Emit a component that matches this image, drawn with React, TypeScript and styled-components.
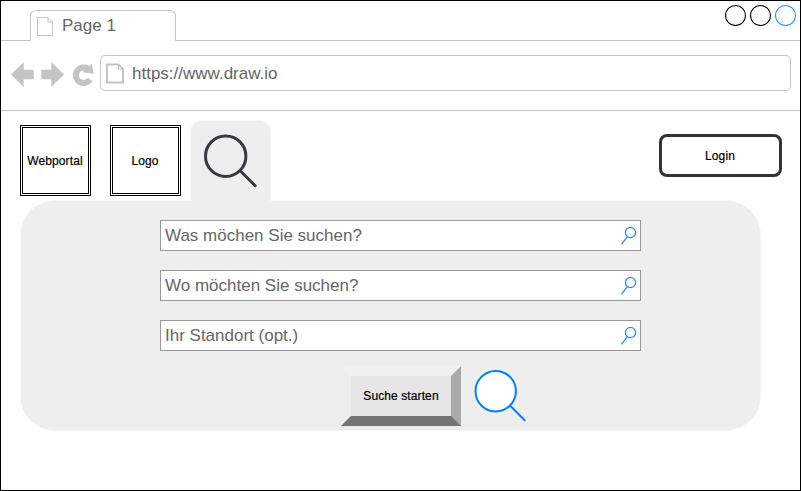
import React from "react";
import styled, { createGlobalStyle } from "styled-components";

const GlobalStyle = createGlobalStyle`
  * { box-sizing: border-box; }
  body { margin: 0; background: #fff; font-family: "Liberation Sans", Arial, sans-serif; }
`;

const BrowserWindow = styled.div`
  width: 801px;
  height: 491px;
  border: 1px solid #000;
  background: #fff;
  overflow: hidden;
`;

const TabStrip = styled.header`
  height: 40px;
  display: flex;
  justify-content: space-between;
  padding: 0 3px 0 29px;
  border-bottom: 1px solid #c4c4c4;
`;

const PageTab = styled.div`
  width: 146px;
  height: 31px;
  margin-top: 9px;
  padding: 0 0 0 6px;
  display: flex;
  gap: 8px;
  border: 1px solid #c4c4c4;
  border-bottom: 0;
  border-radius: 6px 6px 0 0;
  background: #fff;
  color: #666;
  font-size: 17px;
  line-height: 30px;
  svg { margin-top: 6px; }
`;

const WindowControls = styled.div`
  display: flex;
  gap: 3px;
  padding-top: 3px;
`;

const AddressBar = styled.nav`
  height: 70px;
  display: flex;
  padding: 14px 9px 0 9px;
  border-bottom: 1px solid #c4c4c4;
`;

const NavIcons = styled.svg`
  width: 90px;
  height: 36px;
  flex: none;
`;

const UrlBox = styled.div`
  flex: 1;
  height: 36px;
  display: flex;
  gap: 7px;
  padding: 7px 0 0 5px;
  border: 1px solid #c4c4c4;
  border-radius: 5px;
  color: #666;
  font-size: 17px;
  line-height: 22px;
`;

const TopRow = styled.div`
  height: 89px;
  display: flex;
  padding: 0 18px 0 19px;
`;

const LogoBox = styled.div<{ $gap: number }>`
  width: 71px;
  height: 71px;
  margin: 14px ${(p) => p.$gap}px 0 0;
  padding-right: 1px;
  display: flex;
  align-items: center;
  justify-content: center;
  border: 3px double #000;
  font-size: 12px;
  letter-spacing: 0.1px;
  -webkit-text-stroke: 0.2px #000;
`;

const SearchTab = styled.div`
  position: relative;
  width: 81px;
  height: 81px;
  margin-top: 9px;
  padding: 10px 0 0 10px;
  border: 1px solid #f6f6f6;
  border-bottom: 0;
  border-radius: 12px 12px 0 0;
  background: #eee;
`;

const LoginButton = styled.button`
  width: 123px;
  height: 43px;
  margin: 23px 0 0 auto;
  padding: 0 1px 0 0;
  border: 3px solid #333;
  border-radius: 8px;
  background: #fff;
  color: #000;
  font: 12px "Liberation Sans", Arial, sans-serif;
  letter-spacing: 0.1px;
  -webkit-text-stroke: 0.2px #000;
`;

const SearchPanel = styled.main`
  width: 741px;
  height: 231px;
  margin-left: 19px;
  padding: 19px 0 0 139px;
  border: 1px solid #f6f6f6;
  border-radius: 35px;
  background: #eee;
`;

const SearchField = styled.div`
  width: 481px;
  height: 31px;
  margin-bottom: 19px;
  padding: 0 3px 0 4px;
  display: flex;
  justify-content: space-between;
  border: 1px solid #999;
  background: #fff;
  color: #666;
  font-size: 17px;
  line-height: 29px;
  svg { margin-top: 5px; }
`;

const ActionRow = styled.div`
  display: flex;
  gap: 10px;
  margin: -4px 0 0 181px;
`;

const BevelButton = styled.button`
  width: 120px;
  height: 60px;
  padding: 0;
  border-style: solid;
  border-width: 10px;
  border-color: #f0f0f0 #aaa #737373 #ededed;
  background: #e6e6e6;
  color: #000;
  font: 12px "Liberation Sans", Arial, sans-serif;
  letter-spacing: 0.1px;
  -webkit-text-stroke: 0.2px #000;
`;

function PageIcon({ bold = false }: { bold?: boolean }) {
  return bold ? (
    <svg width="19" height="22" viewBox="0 0 19 22" fill="none" stroke="#c4c4c4">
      <path d="M1 1.5H12.5L17 6V19.5H1Z" strokeWidth="2" />
      <path d="M12.5 1.5V6H17" />
    </svg>
  ) : (
    <svg width="17" height="20" viewBox="0 0 17 20" fill="none" stroke="#c4c4c4">
      <path d="M.5 .5H11L15.5 5V18.5H.5ZM11 .5V5H15.5" />
    </svg>
  );
}

function Circle({ color }: { color: string }) {
  return (
    <svg width="22" height="22" viewBox="0 0 22 22">
      <circle cx="10.5" cy="11.5" r="10" fill="#fff" stroke={color} strokeWidth="1.1" />
    </svg>
  );
}

function Magnifier({ color, width, fill }: { color: string; width: number; fill: string }) {
  return (
    <svg width="60" height="60" viewBox="0 0 60 60" fill={fill} stroke={color} strokeWidth={width}>
      <circle cx="24.7" cy="25.2" r="20.2" />
      <path d="M39.2 39.7L54.2 54.7" strokeLinecap={width > 2 ? "round" : "butt"} />
    </svg>
  );
}

function FieldIcon() {
  return (
    <svg width="16" height="20" viewBox="0 0 16 20" fill="none" stroke="#1e90ff" strokeWidth="1.3">
      <circle cx="9.5" cy="6.5" r="5.1" />
      <path d="M6.4 10.7L.5 18.4" />
    </svg>
  );
}

const fields = ["Was möchen Sie suchen?", "Wo möchten Sie suchen?", "Ihr Standort (opt.)"];

export default function App() {
  return (
    <>
      <GlobalStyle />
      <BrowserWindow>
        <TabStrip>
          <PageTab><PageIcon />Page 1</PageTab>
          <WindowControls>
            <Circle color="#000" />
            <Circle color="#000" />
            <Circle color="#1e90ff" />
          </WindowControls>
        </TabStrip>
        <AddressBar>
          <NavIcons viewBox="10 55 90 36" fill="#c4c4c4">
            <path d="M11 74.5L23.7 62V69.7H33.7V79.3H23.7V87Z" />
            <path d="M64 74.5L51.3 62V69.7H41.3V79.3H51.3V87Z" />
            <path d="M90.2 79.5A7.8 7.8 0 1 1 87.5 68.5" fill="none" stroke="#c4c4c4" strokeWidth="6" />
            <path d="M91.7 63.7L93.8 73.8L82.4 72.3Z" />
          </NavIcons>
          <UrlBox><PageIcon bold />https://www.draw.io</UrlBox>
        </AddressBar>
        <TopRow>
          <LogoBox $gap={19}>Webportal</LogoBox>
          <LogoBox $gap={9}>Logo</LogoBox>
          <SearchTab><Magnifier color="#36393d" width={3} fill="none" /></SearchTab>
          <LoginButton>Login</LoginButton>
        </TopRow>
        <SearchPanel>
          {fields.map((label) => (
            <SearchField key={label}>{label}<FieldIcon /></SearchField>
          ))}
          <ActionRow>
            <BevelButton>Suche starten</BevelButton>
            <Magnifier color="#007fff" width={2} fill="#fff" />
          </ActionRow>
        </SearchPanel>
      </BrowserWindow>
    </>
  );
}
